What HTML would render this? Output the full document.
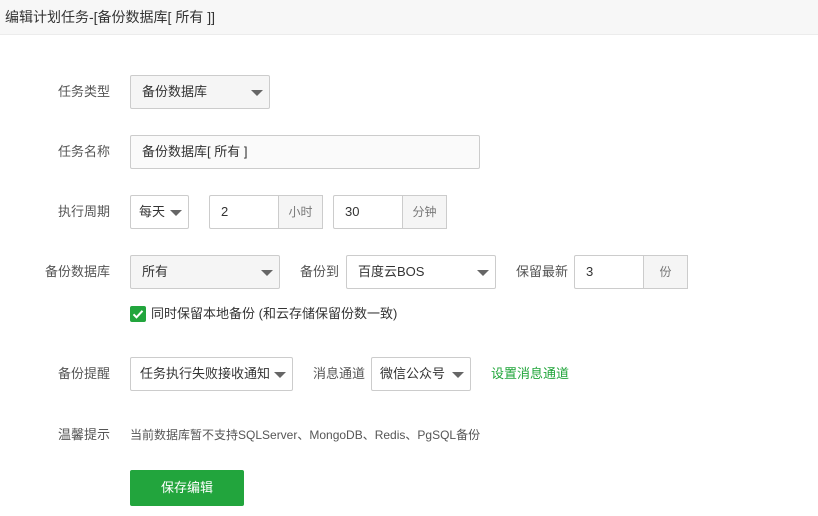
<!DOCTYPE html>
<html><head><meta charset="utf-8"><style>
*{box-sizing:border-box;margin:0;padding:0}
body{width:818px;height:516px;background:#fff;font-family:"Liberation Sans","Noto Sans CJK SC",sans-serif;font-size:13px;color:#555;position:relative;overflow:hidden}
.hd{position:absolute;left:0;top:0;width:818px;height:35px;background:#f7f7f7;border-bottom:1px solid #ececec;padding-left:5px;line-height:34px;font-size:14px;color:#333}
.a{position:absolute}
.lb{position:absolute;width:80px;text-align:right;line-height:34px;color:#555}
.box{position:absolute;height:34px;border:1px solid #ccc;border-radius:2px;line-height:32px;padding-left:11px;color:#333;background:#fff}
.g{background:#f5f5f5}
.f{background:#fafafa}
.sel::after{content:"";position:absolute;right:6px;top:14px;border-left:6px solid transparent;border-right:6px solid transparent;border-top:6px solid #666}
.ad{position:absolute;height:34px;border:1px solid #ccc;border-left:none;background:#f5f5f5;line-height:32px;text-align:center;color:#777;font-size:12px}
.tx{position:absolute;line-height:34px;color:#555}
</style></head><body>
<div class="hd">编辑计划任务-[备份数据库[ 所有 ]]</div>

<div class="lb" style="left:30px;top:75px">任务类型</div>
<div class="box g sel" style="left:130px;top:75px;width:140px">备份数据库</div>

<div class="lb" style="left:30px;top:135px">任务名称</div>
<div class="box f" style="left:130px;top:135px;width:350px">备份数据库[ 所有 ]</div>

<div class="lb" style="left:30px;top:195px">执行周期</div>
<div class="box sel" style="left:130px;top:195px;width:59px;padding-left:8px">每天</div>
<div class="box" style="left:209px;top:195px;width:70px;border-radius:2px 0 0 2px">2</div>
<div class="ad" style="left:279px;top:195px;width:44px">小时</div>
<div class="box" style="left:333px;top:195px;width:70px;border-radius:2px 0 0 2px">30</div>
<div class="ad" style="left:403px;top:195px;width:44px">分钟</div>

<div class="lb" style="left:30px;top:255px">备份数据库</div>
<div class="box g sel" style="left:130px;top:255px;width:150px">所有</div>
<div class="tx" style="left:300px;top:255px">备份到</div>
<div class="box sel" style="left:346px;top:255px;width:150px">百度云BOS</div>
<div class="tx" style="left:516px;top:255px">保留最新</div>
<div class="box" style="left:574px;top:255px;width:70px;border-radius:2px 0 0 2px">3</div>
<div class="ad" style="left:644px;top:255px;width:44px">份</div>

<div class="a" style="left:130px;top:306px;width:16px;height:16px;background:#22a53d;border-radius:2px">
<svg width="16" height="16" viewBox="0 0 16 16"><path d="M3.5 8.3l3 3 6-6.5" stroke="#fff" stroke-width="2" fill="none"/></svg></div>
<div class="a" style="left:151px;top:305px;line-height:18px;color:#333">同时保留本地备份 (和云存储保留份数一致)</div>

<div class="lb" style="left:30px;top:357px">备份提醒</div>
<div class="box sel" style="left:130px;top:357px;width:163px;padding-left:9px">任务执行失败接收通知</div>
<div class="tx" style="left:313px;top:357px">消息通道</div>
<div class="box sel" style="left:371px;top:357px;width:100px;padding-left:8px">微信公众号</div>
<div class="tx" style="left:491px;top:357px;color:#20a53a">设置消息通道</div>

<div class="lb" style="left:30px;top:418px">温馨提示</div>
<div class="tx" style="left:130px;top:418px;font-size:12px">当前数据库暂不支持SQLServer、MongoDB、Redis、PgSQL备份</div>

<div class="a" style="left:130px;top:470px;width:114px;height:36px;background:#22a53d;border-radius:2px;color:#fff;text-align:center;line-height:36px">保存编辑</div>
</body></html>
